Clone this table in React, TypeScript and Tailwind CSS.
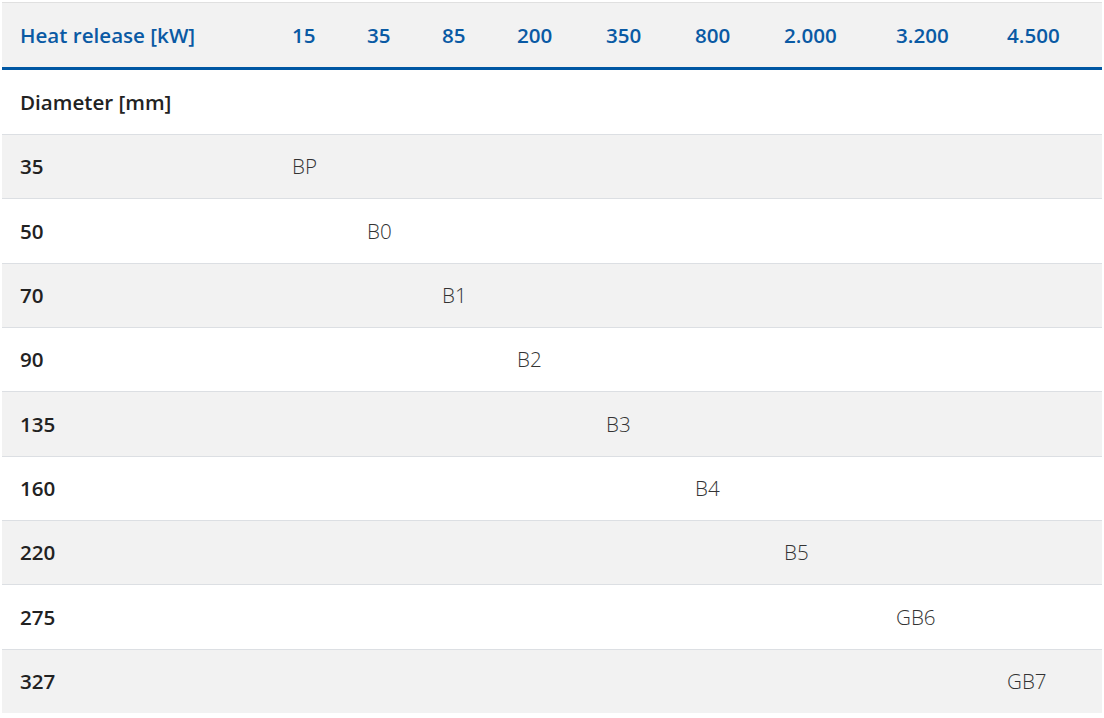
import React from "react";

const heads = ["15", "35", "85", "200", "350", "800", "2.000", "3.200", "4.500"];
const rows: [string, number, string][] = [
  ["35", 0, "BP"],
  ["50", 1, "B0"],
  ["70", 2, "B1"],
  ["90", 3, "B2"],
  ["135", 4, "B3"],
  ["160", 5, "B4"],
  ["220", 6, "B5"],
  ["275", 7, "GB6"],
  ["327", 8, "GB7"],
];

const grid =
  "grid grid-cols-[272px_75px_75px_75px_89px_89px_89px_112px_111px_113px] items-center";

export default function App() {
  return (
    <div
      className="w-[1104px] h-[718px] bg-white pt-[2px] pl-[2px]"
      style={{ fontFamily: '"Open Sans", "Noto Sans", sans-serif' }}
    >
      <div className="w-[1100px]">
        <div
          className={`${grid} h-[68px] border-t border-[#e0e0e0] border-b-[3px] border-b-[#0057a3] bg-[#f2f2f2] text-[20.6px] font-semibold text-[#0a5aa4]`}
        >
          <div className="pl-[18px]">Heat release [kW]</div>
          {heads.map((h) => (
            <div key={h} className="pl-[18px]">
              {h}
            </div>
          ))}
        </div>
        <div className={`${grid} h-[64px] bg-white text-[20.6px] font-semibold text-[#222]`}>
          <div className="pl-[18px]">Diameter [mm]</div>
        </div>
        {rows.map(([d, idx, v], i) => (
          <div
            key={d}
            className={`${grid} h-[64.33px] border-t border-[#dcdfe3] ${
              i % 2 === 0 ? "bg-[#f2f2f2]" : "bg-white"
            }`}
          >
            <div className="pl-[18px] text-[20.6px] font-semibold text-[#222]">{d}</div>
            {heads.map((h, j) => (
              <div key={h} className="pl-[18px] text-[20.6px] font-light text-[#333]">
                {j === idx ? v : ""}
              </div>
            ))}
          </div>
        ))}
      </div>
    </div>
  );
}
